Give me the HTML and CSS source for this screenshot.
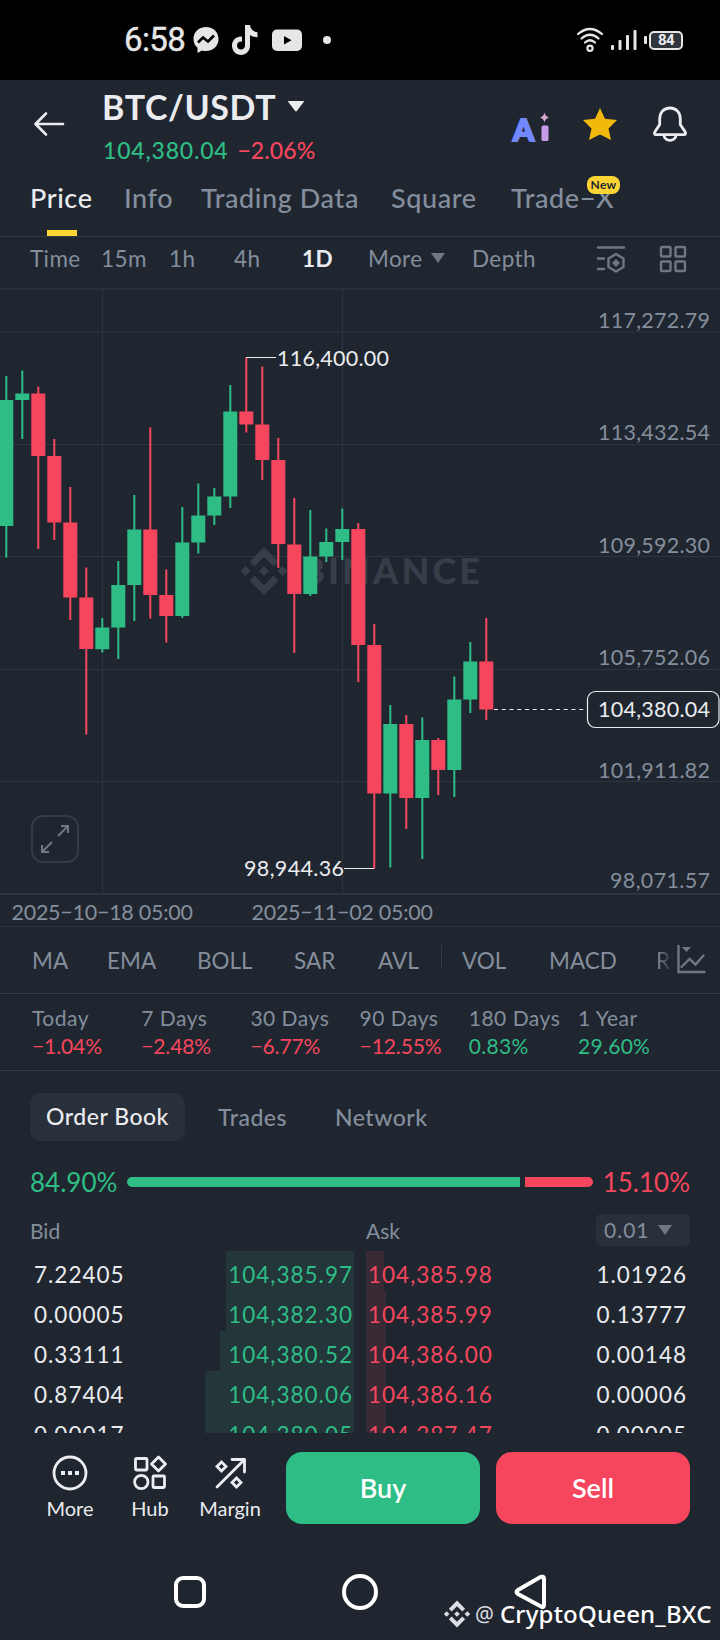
FILE: index.html
```
<!DOCTYPE html>
<html lang="en">
	<head>
		<meta charset="UTF-8" />
		<meta name="viewport" content="width=device-width, initial-scale=1.0" />
		<title>BTC/USDT</title>
		<link rel="stylesheet" href="styles.css">
	</head>
	<body>
		<div class="status-bar">
			<div class="status-left">
				<span class="clock">6:58</span>
				<svg width="28" height="28" viewBox="0 0 28 28">
					<path fill="#e6e6e6" d="M14 1C6.500 1 1.500 6.300 1.500 13c0 3.600 1.500 6.600 4 8.700V27l4.500-2.500c1.300.4 2.600.5 4 .5 7.500 0 12.500-5.300 12.500-12S21.500 1 14 1z" />
					<path fill="none" stroke="#000" stroke-width="2.600" d="M6 16.500l5-5 5 4 6-6" />
				</svg>
				<svg class="tiktok" width="28" height="32" viewBox="0 0 28 32">
					<path fill="#e6e6e6" d="M14 1h5c.4 4 3.500 7 7.500 7.200v5c-2.800 0-5.500-.8-7.500-2.200v10.500C19 27 15 31 10 31S1 27 1 21.500 5.500 12 11 12.500v5.200c-3-.7-5 1.200-5 3.800 0 2.400 1.800 4 4 4s4-1.600 4-4z" />
				</svg>
				<svg width="32" height="24" viewBox="0 0 32 24">
					<rect x="1" y="1.500" width="30" height="21.500" rx="5" fill="#e6e6e6" />
					<path d="M13 8l7.500 4.200-7.500 4.200z" />
				</svg>
				<span class="dot"></span>
			</div>
			<div class="status-right">
				<svg width="28" height="26" viewBox="0 0 28 26" fill="none" stroke="#e6e6e6" stroke-width="2.200" stroke-linecap="round">
					<path d="M2 7q12-10 24 0M5.500 11.500q8.500-7.500 17 0M9 15.500q5-4.500 10 0" />
					<circle cx="14" cy="21.300" r="2.600" />
				</svg>
				<svg width="28" height="22" viewBox="0 0 28 22" fill="#e6e6e6">
					<rect x="1" y="16" width="3" height="5" rx="1" />
					<rect x="8.500" y="11" width="3" height="10" rx="1" />
					<rect x="16" y="6" width="3" height="15" rx="1" />
					<rect x="23.500" y="1" width="3" height="20" rx="1" />
				</svg>
				<span class="battery-tip"></span>
				<span class="battery">84</span>
			</div>
		</div>

		<header class="header">
			<svg class="back" width="34" height="28" viewBox="0 0 34 28">
				<path d="M31 14H4M14 3.500L3.500 14 14 24.500" />
			</svg>
			<div class="pair">
				<div class="pair-name">BTC/USDT
					<svg width="18" height="13" viewBox="0 0 18 13"><path fill="#eaecef" d="M1.500 1h15q1 0 .4.800L10 10.800q-1 1.400-2 0L1.100 1.800Q.5 1 1.500 1z" /></svg>
				</div>
				<div class="pair-price"><span class="up">104,380.04</span><span class="down change">−2.06%</span></div>
			</div>
			<div class="header-icons">
				<svg class="ai-icon" width="38" height="36" viewBox="0 0 38 36">
					<text class="ai" x="0" y="32.500" textLength="26">A</text>
					<rect x="28.500" y="17.500" width="7" height="15.500" rx="1.500" fill="#c79be8" />
					<path fill="#d8a7d2" d="M31.500 4.500q.8 4 4.500 5-3.700 1-4.500 5-.8-4-4.500-5 3.700-1 4.500-5z" />
				</svg>
				<svg class="star" width="36" height="34" viewBox="0 0 36 34">
					<path fill="#f0b90b" d="M18 1l4.900 10.700L35 13l-8.500 8.400L29 33l-11-5.500L7 33l2.500-11.600L1 13l12.100-1.300z" />
				</svg>
				<svg class="bell" width="36" height="38" viewBox="0 0 36 38">
					<path d="M18 3C11.500 3 7.700 7.800 7.700 14v5.500L2.800 27c-.8 1.500-.2 2.700 1.200 2.700h28c1.400 0 2-1.200 1.200-2.700l-4.900-7.500V14C28.300 7.800 24.500 3 18 3zM12 30.500c.8 6.500 11.200 6.500 12 0" />
				</svg>
			</div>
		</header>

		<nav class="tabs">
			<span class="tab active">Price</span>
			<span class="tab">Info</span>
			<span class="tab">Trading Data</span>
			<span class="tab">Square</span>
			<span class="tab">Trade−X<b class="new">New</b></span>
		</nav>

		<div class="intervals">
			<span>Time</span>
			<span>15m</span>
			<span>1h</span>
			<span>4h</span>
			<span class="selected">1D</span>
			<span>More <i class="caret"></i></span>
			<span>Depth</span>
			<svg width="30" height="28" viewBox="0 0 30 28" fill="none" stroke="#707782" stroke-width="2.400" stroke-linecap="round">
				<path d="M2 2.500h26M2 13.500h6M2 24h6" />
				<path stroke-linejoin="round" d="M20 9l7.500 4.500v8.500L20 26.500 12.500 22v-8.500z" />
				<path fill="#707782" stroke="none" d="M20 14l4 4-4 4-4-4z" />
			</svg>
			<svg width="28" height="28" viewBox="0 0 28 28" fill="none" stroke="#707782" stroke-width="2.400">
				<rect x="2" y="2" width="9.500" height="9.500" rx="1" />
				<rect x="16.500" y="2" width="9.500" height="9.500" rx="1" />
				<rect x="2" y="16.500" width="9.500" height="9.500" rx="1" />
				<rect x="16.500" y="16.500" width="9.500" height="9.500" rx="1" />
			</svg>
		</div>

		<svg class="chart" width="720" height="637" viewBox="0 290 720 637">
			<g class="grid">
				<path d="M0 332H720M0 444.500H720M0 556.500H720M0 669.500H720M0 781.500H720M102.500 290V894M342.500 290V894M0 926.500H720" />
				<path stroke-width="2" d="M0 894H720" />
			</g>
			<g class="brand">
				<path d="M264 547l14.500 14.500-5 5L264 557l-9.500 9.500-5-5zM264 595l14.500-14.500-5-5L264 585l-9.500-9.500-5 5zM245.500 566l5 5-5 5-5-5zM264 566l5 5-5 5-5-5zM282.500 566l5 5-5 5-5-5z" />
				<text x="301" y="584" textLength="179">BINANCE</text>
			</g>
			<g id="candles"></g>
			<path class="marker" d="M246 357.500h30M344 868.500h30" />
			<path class="marker" stroke-dasharray="4 3.750" d="M494 709.500h93" />
			<g class="mark-text">
				<text x="277" y="366" textLength="112">116,400.00</text>
				<text x="244" y="876" textLength="100">98,944.36</text>
			</g>
			<g class="axis">
				<text x="598" y="328" textLength="112">117,272.79</text>
				<text x="598" y="440" textLength="112">113,432.54</text>
				<text x="598" y="553" textLength="112">109,592.30</text>
				<text x="598" y="665" textLength="112">105,752.06</text>
				<text x="598" y="778" textLength="112">101,911.82</text>
				<text x="610" y="888" textLength="100">98,071.57</text>
				<text x="11.500" y="920" textLength="181.500">2025−10−18 05:00</text>
				<text x="251.500" y="920" textLength="181.500">2025−11−02 05:00</text>
			</g>
			<rect class="current-box" x="587.500" y="691.500" width="131.500" height="36" rx="8" />
			<g class="mark-text"><text x="598" y="717" textLength="112">104,380.04</text></g>
			<rect class="expand-box" x="32" y="816" width="46" height="46" rx="11" />
			<path class="expand" d="M58 836l10-10M61 826h7v7M52 842l-10 10M42 845v7h7" />
		</svg>

		<div class="indicators">
			<span>MA</span>
			<span>EMA</span>
			<span>BOLL</span>
			<span>SAR</span>
			<span>AVL</span>
			<i class="divider"></i>
			<span>VOL</span>
			<span>MACD</span>
			<span class="faded">RSI</span>
			<svg width="30" height="30" viewBox="0 0 30 30" fill="none" stroke="#707782" stroke-width="2.400" stroke-linecap="round">
				<path d="M2.500 2v26H28.500M5.500 23l8-8 6 5.500 8-9" />
				<path fill="#707782" stroke="none" d="M6 3h9l-4.500 5z" />
			</svg>
		</div>

		<div class="performance">
			<div>Today<span class="down">−1.04%</span></div>
			<div>7 Days<span class="down">−2.48%</span></div>
			<div>30 Days<span class="down">−6.77%</span></div>
			<div>90 Days<span class="down">−12.55%</span></div>
			<div>180 Days<span class="up">0.83%</span></div>
			<div>1 Year<span class="up">29.60%</span></div>
		</div>

		<div class="book-tabs">
			<span class="book-tab current">Order Book</span>
			<span class="book-tab">Trades</span>
			<span class="book-tab">Network</span>
		</div>

		<div class="ratio">
			<span class="up">84.90%</span>
			<div class="ratio-bar"><i class="bids"></i><i class="asks"></i></div>
			<span class="down">15.10%</span>
		</div>

		<div class="book-head">
			<span>Bid</span>
			<span>Ask</span>
			<span class="tick">0.01 <i class="caret"></i></span>
		</div>

		<div class="book">
			<div class="book-row"><div class="bid"><span>7.22405</span><span class="up depth" style="width: 128px">104,385.97</span></div><div class="ask"><i class="fill" style="width: 18px"></i><span class="down">104,385.98</span><span>1.01926</span></div></div>
			<div class="book-row"><div class="bid"><span>0.00005</span><span class="up depth" style="width: 128px">104,382.30</span></div><div class="ask"><i class="fill" style="width: 20px"></i><span class="down">104,385.99</span><span>0.13777</span></div></div>
			<div class="book-row"><div class="bid"><span>0.33111</span><span class="up depth" style="width: 134px">104,380.52</span></div><div class="ask"><i class="fill" style="width: 20px"></i><span class="down">104,386.00</span><span>0.00148</span></div></div>
			<div class="book-row"><div class="bid"><span>0.87404</span><span class="up depth" style="width: 149px">104,380.06</span></div><div class="ask"><i class="fill" style="width: 20px"></i><span class="down">104,386.16</span><span>0.00006</span></div></div>
			<div class="book-row"><div class="bid"><span>0.00017</span><span class="up depth" style="width: 149px">104,380.05</span></div><div class="ask"><i class="fill" style="width: 20px"></i><span class="down">104,387.47</span><span>0.00005</span></div></div>
		</div>

		<footer class="actions">
			<div class="action">
				<svg width="36" height="36" viewBox="0 0 36 36">
					<circle cx="18" cy="18" r="16" />
					<path stroke-width="4" d="M9 18h4M16 18h4M23 18h4" />
				</svg>
				More
			</div>
			<div class="action">
				<svg width="36" height="36" viewBox="0 0 36 36">
					<rect x="3.500" y="3.500" width="11.500" height="11.500" rx="1" />
					<path stroke-linejoin="round" d="M26.500 2l7 7-7 7-7-7z" />
					<circle cx="9.300" cy="27" r="6.700" />
					<rect x="21" y="21" width="11.500" height="11.500" rx="1" />
				</svg>
				Hub
			</div>
			<div class="action">
				<svg width="36" height="36" viewBox="0 0 36 36">
					<path stroke-linecap="round" stroke-linejoin="round" d="M5 32L32 5M20 4.500h12.500V17" />
					<path d="M9.500 7l4.500 4.500L9.500 16 5 11.500zM24.500 23l4.500 4.500-4.500 4.500-4.500-4.500z" />
				</svg>
				Margin
			</div>
			<button class="buy">Buy</button>
			<button class="sell">Sell</button>
		</footer>

		<div class="nav-bar">
			<svg width="36" height="40" viewBox="0 0 36 40"><rect x="4" y="6" width="28" height="28" rx="7" /></svg>
			<svg width="40" height="40" viewBox="0 0 40 40"><circle cx="20" cy="20" r="16" /></svg>
			<svg width="36" height="40" viewBox="0 0 36 40"><path d="M30 4.800Q32 4.200 32 7v26q0 2.800-2.500 1.800L6 22q-3-2 0-4L28 5.200q1-.4 2-.4z" /></svg>
		</div>

		<div class="credit">
			<svg width="28" height="28" viewBox="239 546 50 50">
				<path fill="#dcdde0" d="M264 547l14.500 14.500-5 5L264 557l-9.500 9.500-5-5zM264 595l14.500-14.500-5-5L264 585l-9.500-9.500-5 5zM245.500 566l5 5-5 5-5-5zM264 566l5 5-5 5-5-5zM282.500 566l5 5-5 5-5-5z" />
			</svg>
			<span class="at">@</span>
			<span class="handle">CryptoQueen_BXC</span>
		</div>

		<script>
			// wick top, body top, body bottom, wick bottom, rising
			const candles = [
				[376, 400, 526, 557.5, 1],
				[370.5, 393.5, 400, 439, 1],
				[386.5, 393.5, 456, 549, 0],
				[439, 456, 522.5, 540, 0],
				[487, 522.5, 597.5, 620, 0],
				[567.5, 597.5, 649, 734.5, 0],
				[618, 627.5, 649.3, 652.5, 1],
				[561, 585, 627.5, 659, 1],
				[495, 529.5, 585, 621, 1],
				[427.5, 529.5, 595, 618.5, 0],
				[569.5, 595, 616, 642.5, 0],
				[507, 542.5, 616, 618, 1],
				[483.5, 515.5, 542.5, 553.5, 1],
				[488, 496.5, 515.5, 525, 1],
				[385, 411.5, 496.5, 508, 1],
				[357.5, 411.5, 424.5, 432.5, 0],
				[366.5, 424.5, 460, 480, 0],
				[438, 460, 544, 568, 0],
				[498, 544.5, 594, 653, 0],
				[510, 556.5, 594, 596, 1],
				[528.5, 542, 556.5, 562, 1],
				[508.5, 529, 542, 560, 1],
				[523, 529, 645, 682, 0],
				[624, 645, 793.5, 868.5, 0],
				[705, 724, 793.5, 867.5, 1],
				[715, 724, 798, 829, 0],
				[717.5, 740, 798, 859, 1],
				[738, 740, 770, 795, 0],
				[676.5, 699.5, 770, 797, 1],
				[642, 661.5, 699.5, 713, 1],
				[618, 661.5, 709.5, 720, 0],
			]
			let shapes = ""
			candles.forEach(([high, top, bottom, low, rising], i) => {
				const x = 6.3 + i * 16
				const name = rising ? "rise" : "fall"
				shapes += `<path class="${name}" d="M${x - 1} ${high}h2V${low}h-2zM${x - 7} ${top}h14V${bottom}h-14z" />`
			})
			document.getElementById("candles").innerHTML = shapes
		</script>
	</body>
</html>
```
FILE: styles.css
```
* {
	box-sizing: border-box;
}
body {
	margin: 0;
	width: 720px;
	height: 1640px;
	position: relative;
	overflow: hidden;
	background: #202630;
	color: #eaecef;
	font-family: Lato, "Liberation Sans", sans-serif;
	font-size: 22px;
}
svg {
	display: block;
	flex-shrink: 0;
}
.up {
	color: #2ebd85;
}
.down {
	color: #f6465d;
}
.caret {
	display: inline-block;
	border: 7.5px solid transparent;
	border-top: 10px solid #707782;
	border-bottom: 0;
}

/* status bar */
.status-bar {
	height: 80px;
	background: #000;
	display: flex;
	justify-content: space-between;
	align-items: center;
	padding: 0 37px 0 124px;
}
.status-left,
.status-right {
	display: flex;
	align-items: center;
}
.clock {
	font: 400 33px/42px Roboto, sans-serif;
	color: #e6e6e6;
	width: 68px;
	letter-spacing: -0.6px;
	-webkit-text-stroke: 0.4px #e6e6e6;
}
.tiktok {
	margin: 0 12px 0 11px;
}
.dot {
	width: 8px;
	height: 8px;
	border-radius: 50%;
	background: #e6e6e6;
	margin-left: 20px;
}
.status-right svg {
	margin-right: 6px;
}
.battery-tip {
	width: 3px;
	height: 8px;
	background: #e6e6e6;
	border-radius: 1px;
	margin-right: 2px;
}
.battery {
	width: 34px;
	height: 19px;
	border: 2px solid #e6e6e6;
	border-radius: 5px;
	background: #30343c;
	font: 700 15px/15px Roboto, sans-serif;
	letter-spacing: -0.5px;
	text-align: center;
}

/* header */
.header {
	height: 85px;
	display: flex;
	padding: 0 32px;
}
.back {
	margin-top: 30px;
	fill: none;
	stroke: #eaecef;
	stroke-width: 2.6;
	stroke-linecap: round;
	stroke-linejoin: round;
}
.pair {
	margin-left: 36px;
	flex: 1;
}
.pair-name {
	display: flex;
	align-items: center;
	gap: 11px;
	height: 53px;
	font-size: 34px;
	font-weight: 700;
	letter-spacing: 0.6px;
}
.pair-price {
	display: flex;
	gap: 9px;
	padding-left: 1px;
	line-height: 35px;
	font-size: 23px;
	font-weight: 500;
	letter-spacing: 0.8px;
}
.change {
	letter-spacing: 0.1px;
}
.header-icons {
	display: flex;
}
.ai-icon {
	margin-top: 28px;
	overflow: visible;
}
.ai {
	font-size: 30px;
	font-weight: 900;
	fill: #7288ff;
	stroke: #7288ff;
	stroke-width: 2px;
}
.header-icons .star {
	margin: 27px 34px 0 31px;
}
.header-icons .bell {
	margin-top: 25px;
	fill: none;
	stroke: #eaecef;
	stroke-width: 2.8;
}

/* page tabs */
.tabs {
	height: 72px;
	display: grid;
	grid-template-columns: 94px 77px 190px 120px 110px;
	padding-left: 30px;
	border-bottom: 1px solid #333b47;
}
.tab {
	position: relative;
	height: 71px;
	line-height: 66px;
	font-size: 27px;
	font-weight: 500;
	color: #848e9c;
	letter-spacing: 0.6px;
}
.tab.active {
	color: #eaecef;
}
.tab.active::after {
	content: "";
	position: absolute;
	left: 17px;
	bottom: 0;
	width: 30px;
	height: 6px;
	background: #fcd535;
}
.new {
	position: absolute;
	left: 76px;
	top: 11px;
	width: 33px;
	height: 18px;
	border-radius: 8px;
	background: #fcd535;
	color: #202630;
	font-size: 12px;
	line-height: 18px;
	letter-spacing: 0.3px;
	text-align: center;
}

/* chart */
.intervals {
	display: grid;
	grid-template-columns: 71px 68px 65px 68px 66px 104px 124px 63px 28px;
	align-items: center;
	height: 53px;
	padding: 0 0 8px 30px;
	border-bottom: 2px solid #29303b;
	color: #848e9c;
	font-size: 22.5px;
	letter-spacing: 0.4px;
	white-space: nowrap;
}
.intervals .selected {
	color: #eaecef;
	font-weight: 700;
}
.intervals .caret {
	margin: 0 0 4px 2px;
}
.grid {
	fill: none;
	stroke: #2e3541;
}
.brand {
	fill: #373e49;
	font-size: 36px;
	font-weight: 900;
}
.rise {
	fill: #2ebd85;
}
.fall {
	fill: #f6465d;
}
.marker {
	fill: none;
	stroke: #eaecef;
	stroke-width: 1.2;
}
.mark-text {
	fill: #eaecef;
}
.axis {
	fill: #848e9c;
}
.axis text,
.mark-text text {
	font-size: 21.5px;
}
.current-box {
	fill: #202630;
	stroke: #eaecef;
	stroke-width: 1.2;
}
.expand-box {
	fill: none;
	stroke: #333b47;
	stroke-width: 2;
}
.expand {
	fill: none;
	stroke: #707782;
	stroke-width: 2;
}

/* indicators */
.indicators {
	display: grid;
	grid-template-columns: 75px 90px 97px 84px 63px 21px 87px 107px 20px 30px;
	align-items: center;
	height: 67px;
	padding-left: 32px;
	border-bottom: 1px solid #333b47;
	color: #848e9c;
	font-size: 22.5px;
}
.indicators span {
	padding-top: 1px;
}
.indicators svg {
	margin-top: -3px;
}
.divider {
	width: 1px;
	height: 24px;
	margin-top: -6px;
	background: #333b47;
}
.faded {
	width: 18px;
	overflow: hidden;
	background: linear-gradient(90deg, #848e9c, #202630);
	background-clip: text;
	-webkit-background-clip: text;
	color: transparent;
}
.performance {
	display: grid;
	grid-template-columns: repeat(5, 109.2px) 109px;
	height: 77px;
	padding: 10px 0 0 32px;
	border-bottom: 1px solid #333b47;
	color: #848e9c;
	font-size: 21px;
	line-height: 28px;
	letter-spacing: 0.5px;
}
.performance span {
	display: block;
	letter-spacing: -0.1px;
}
.performance .up {
	letter-spacing: 0.3px;
}

/* order book */
.book-tabs {
	display: flex;
	align-items: center;
	height: 92px;
	padding-left: 30px;
}
.book-tab {
	margin-left: 33px;
	margin-right: 15px;
	color: #848e9c;
	font-size: 23px;
	font-weight: 500;
	line-height: 47px;
	letter-spacing: 0.5px;
}
.book-tab.current {
	width: 155px;
	height: 48px;
	margin: 0;
	text-align: center;
	border-radius: 11px;
	background: #2a303b;
	color: #eaecef;
}
.ratio {
	display: flex;
	align-items: center;
	justify-content: space-between;
	height: 37px;
	padding: 0 30px;
	font-size: 26px;
}
.ratio-bar {
	display: flex;
	gap: 5px;
	width: 466px;
	margin-right: 1px;
}
.ratio-bar i {
	height: 10px;
}
.bids {
	flex: 1;
	background: #2ebd85;
	border-radius: 5px 0 0 5px;
}
.asks {
	width: 68px;
	background: #f6465d;
	border-radius: 0 5px 5px 0;
}
.book-head {
	display: grid;
	grid-template-columns: 336px 230px 94px;
	align-items: center;
	height: 51px;
	padding: 9px 0 0 30px;
	color: #848e9c;
	font-size: 21px;
}
.tick {
	height: 32px;
	margin-top: -1px;
	padding-left: 8px;
	border-radius: 5px;
	background: #2a303b;
	line-height: 32px;
	letter-spacing: 1px;
}
.tick .caret {
	margin: 0 0 3px 2px;
}
.book {
	height: 182px;
	overflow: hidden;
	font-size: 22.5px;
	letter-spacing: 1px;
}
.book-row {
	display: flex;
	gap: 12px;
	height: 40px;
	padding: 0 33px 0 34px;
	line-height: 48px;
}
.bid {
	width: 320px;
	display: flex;
	justify-content: space-between;
}
.ask {
	position: relative;
	width: 321px;
	display: flex;
	justify-content: space-between;
	padding-left: 2px;
}
.depth {
	height: 40px;
	padding-right: 1px;
	background: #23363a;
	text-align: right;
}
.fill {
	position: absolute;
	left: 0;
	top: 0;
	height: 40px;
	background: #3a2a35;
}
.ask span {
	position: relative;
}

/* bottom */
.actions {
	display: flex;
	height: 111px;
	padding: 19px 30px 0;
}
.action {
	width: 80px;
	display: flex;
	flex-direction: column;
	align-items: center;
	gap: 5px;
	padding-top: 3px;
	font-size: 20px;
	line-height: 24px;
}
.action svg {
	fill: none;
	stroke: #eaecef;
	stroke-width: 2.8;
}
.actions button {
	width: 194px;
	height: 72px;
	margin-left: 16px;
	padding-bottom: 2px;
	border: 0;
	border-radius: 16px;
	color: #fff;
	font: 600 27px Lato, sans-serif;
}
.buy {
	background: #2ebd85;
}
.sell {
	background: #f6465d;
}
.nav-bar {
	display: flex;
	justify-content: space-between;
	padding: 28px 172px 0 172px;
}
.nav-bar svg {
	fill: none;
	stroke: #fff;
	stroke-width: 4;
}
.credit {
	position: absolute;
	left: 443px;
	top: 1599px;
	display: flex;
	align-items: center;
	height: 30px;
	color: #fff;
	font: 400 24px/30px "Noto Sans", sans-serif;
	white-space: nowrap;
}
.at {
	margin: 0 6px 0 4px;
	font-size: 21px;
	color: #dcdde0;
}
.handle {
	font-weight: 500;
	letter-spacing: 0.2px;
}
```
